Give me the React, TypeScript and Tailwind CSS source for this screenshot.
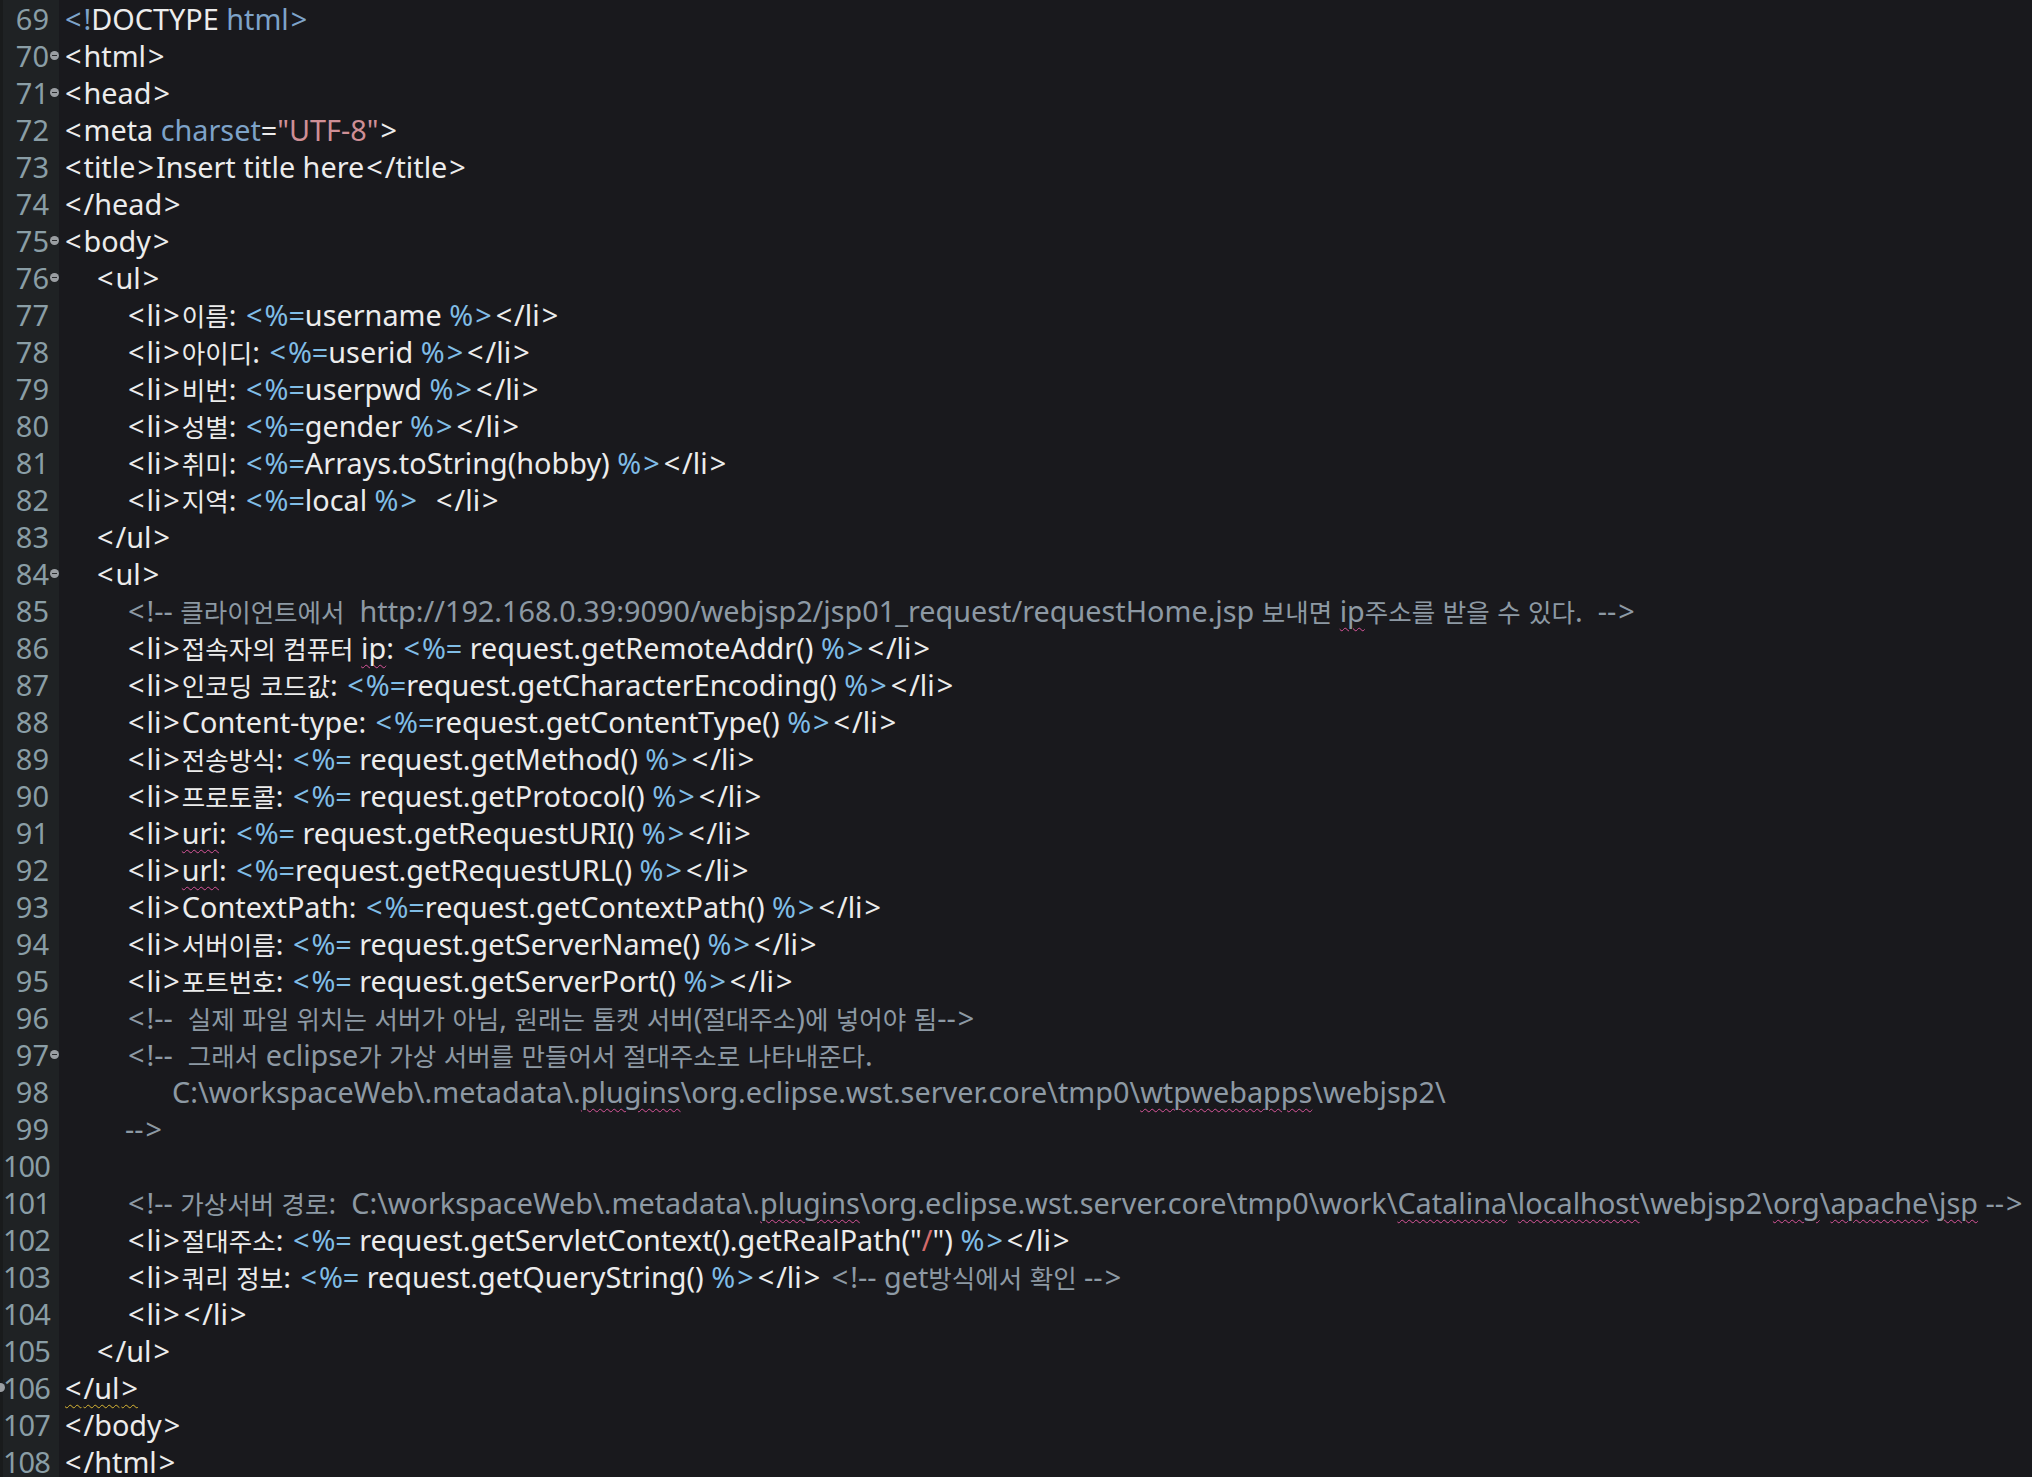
import React from "react";

type Seg = [string, string, string?];

type Line = {
  n: number;
  ind: string;
  fold?: boolean;
  segs: Seg[];
};

const color: Record<string, string> = {
  t: "text-[#ececec]",
  j: "text-[#80bde6]",
  c: "text-[#8d99a4]",
  a: "text-[#7ea3c9]",
  s: "text-[#cf8f96]",
  r: "text-[#d46a6a]",
};

const lines: Line[] = [
  { n: 69, ind: "pl-0", segs: [["<!", "a"], ["DOCTYPE", "t"], [" html>", "a"]] },
  { n: 70, ind: "pl-0", fold: true, segs: [["<html>", "t"]] },
  { n: 71, ind: "pl-0", fold: true, segs: [["<head>", "t"]] },
  { n: 72, ind: "pl-0", segs: [["<meta ", "t"], ["charset", "a"], ["=", "t"], ['"UTF-8"', "s"], [">", "t"]] },
  { n: 73, ind: "pl-0", segs: [["<title>Insert title here</title>", "t"]] },
  { n: 74, ind: "pl-0", segs: [["</head>", "t"]] },
  { n: 75, ind: "pl-0", fold: true, segs: [["<body>", "t"]] },
  { n: 76, ind: "pl-[32px]", fold: true, segs: [["<ul>", "t"]] },
  { n: 77, ind: "pl-[63px]", segs: [["<li>이름: ", "t"], ["<%=", "j"], ["username ", "t"], ["%>", "j"], ["</li>", "t"]] },
  { n: 78, ind: "pl-[63px]", segs: [["<li>아이디: ", "t"], ["<%=", "j"], ["userid ", "t"], ["%>", "j"], ["</li>", "t"]] },
  { n: 79, ind: "pl-[63px]", segs: [["<li>비번: ", "t"], ["<%=", "j"], ["userpwd ", "t"], ["%>", "j"], ["</li>", "t"]] },
  { n: 80, ind: "pl-[63px]", segs: [["<li>성별: ", "t"], ["<%=", "j"], ["gender ", "t"], ["%>", "j"], ["</li>", "t"]] },
  { n: 81, ind: "pl-[63px]", segs: [["<li>취미: ", "t"], ["<%=", "j"], ["Arrays.toString(hobby) ", "t"], ["%>", "j"], ["</li>", "t"]] },
  { n: 82, ind: "pl-[63px]", segs: [["<li>지역: ", "t"], ["<%=", "j"], ["local ", "t"], ["%>", "j"], ["  </li>", "t"]] },
  { n: 83, ind: "pl-[32px]", segs: [["</ul>", "t"]] },
  { n: 84, ind: "pl-[32px]", fold: true, segs: [["<ul>", "t"]] },
  {
    n: 85,
    ind: "pl-[63px]",
    segs: [
      ["<!-- 클라이언트에서  http://192.168.0.39:9090/webjsp2/jsp01_request/requestHome.jsp 보내면 ", "c"],
      ["ip", "c", "p"],
      ["주소를 받을 수 있다.  -->", "c"],
    ],
  },
  { n: 86, ind: "pl-[63px]", segs: [["<li>접속자의 컴퓨터 ", "t"], ["ip", "t", "p"], [": ", "t"], ["<%=", "j"], [" request.getRemoteAddr() ", "t"], ["%>", "j"], ["</li>", "t"]] },
  { n: 87, ind: "pl-[63px]", segs: [["<li>인코딩 코드값: ", "t"], ["<%=", "j"], ["request.getCharacterEncoding() ", "t"], ["%>", "j"], ["</li>", "t"]] },
  { n: 88, ind: "pl-[63px]", segs: [["<li>Content-type: ", "t"], ["<%=", "j"], ["request.getContentType() ", "t"], ["%>", "j"], ["</li>", "t"]] },
  { n: 89, ind: "pl-[63px]", segs: [["<li>전송방식: ", "t"], ["<%=", "j"], [" request.getMethod() ", "t"], ["%>", "j"], ["</li>", "t"]] },
  { n: 90, ind: "pl-[63px]", segs: [["<li>프로토콜: ", "t"], ["<%=", "j"], [" request.getProtocol() ", "t"], ["%>", "j"], ["</li>", "t"]] },
  { n: 91, ind: "pl-[63px]", segs: [["<li>", "t"], ["uri", "t", "p"], [": ", "t"], ["<%=", "j"], [" request.getRequestURI() ", "t"], ["%>", "j"], ["</li>", "t"]] },
  { n: 92, ind: "pl-[63px]", segs: [["<li>", "t"], ["url", "t", "p"], [": ", "t"], ["<%=", "j"], ["request.getRequestURL() ", "t"], ["%>", "j"], ["</li>", "t"]] },
  { n: 93, ind: "pl-[63px]", segs: [["<li>ContextPath: ", "t"], ["<%=", "j"], ["request.getContextPath() ", "t"], ["%>", "j"], ["</li>", "t"]] },
  { n: 94, ind: "pl-[63px]", segs: [["<li>서버이름: ", "t"], ["<%=", "j"], [" request.getServerName() ", "t"], ["%>", "j"], ["</li>", "t"]] },
  { n: 95, ind: "pl-[63px]", segs: [["<li>포트번호: ", "t"], ["<%=", "j"], [" request.getServerPort() ", "t"], ["%>", "j"], ["</li>", "t"]] },
  { n: 96, ind: "pl-[63px]", segs: [["<!--  실제 파일 위치는 서버가 아님, 원래는 톰캣 서버(절대주소)에 넣어야 됨-->", "c"]] },
  { n: 97, ind: "pl-[63px]", fold: true, segs: [["<!--  그래서 eclipse가 가상 서버를 만들어서 절대주소로 나타내준다.", "c"]] },
  {
    n: 98,
    ind: "pl-[109px]",
    segs: [
      ["C:\\workspaceWeb\\.metadata\\.", "c"],
      ["plugins", "c", "p"],
      ["\\org.eclipse.wst.server.core\\tmp0\\", "c"],
      ["wtpwebapps", "c", "p"],
      ["\\webjsp2\\", "c"],
    ],
  },
  { n: 99, ind: "pl-[62px]", segs: [["-->", "c"]] },
  { n: 100, ind: "pl-0", segs: [] },
  {
    n: 101,
    ind: "pl-[63px]",
    segs: [
      ["<!-- 가상서버 경로:  C:\\workspaceWeb\\.metadata\\.", "c"],
      ["plugins", "c", "p"],
      ["\\org.eclipse.wst.server.core\\tmp0\\work\\", "c"],
      ["Catalina", "c", "p"],
      ["\\", "c"],
      ["localhost", "c", "p"],
      ["\\webjsp2\\", "c"],
      ["org", "c", "p"],
      ["\\", "c"],
      ["apache", "c", "p"],
      ["\\", "c"],
      ["jsp", "c", "p"],
      [" -->", "c"],
    ],
  },
  {
    n: 102,
    ind: "pl-[63px]",
    segs: [["<li>절대주소: ", "t"], ["<%=", "j"], [' request.getServletContext().getRealPath("', "t"], ["/", "r"], ['") ', "t"], ["%>", "j"], ["</li>", "t"]],
  },
  {
    n: 103,
    ind: "pl-[63px]",
    segs: [["<li>쿼리 정보: ", "t"], ["<%=", "j"], [" request.getQueryString() ", "t"], ["%>", "j"], ["</li> ", "t"], ["<!-- get방식에서 확인 -->", "c"]],
  },
  { n: 104, ind: "pl-[63px]", segs: [["<li></li>", "t"]] },
  { n: 105, ind: "pl-[32px]", segs: [["</ul>", "t"]] },
  { n: 106, ind: "pl-0", segs: [["</ul>", "t", "y"]] },
  { n: 107, ind: "pl-0", segs: [["</body>", "t"]] },
  { n: 108, ind: "pl-0", segs: [["</html>", "t"]] },
];

const HANGUL = /[\uAC00-\uD7A3\u3131-\u318E]/;

// hangul runs use the CJK face at their own size; angle brackets get a bit of air like the editor font
function Text({ s }: { s: string }) {
  const parts = s.split(/([\uAC00-\uD7A3\u3131-\u318E]+|[<>])/).filter((p) => p !== "");
  return (
    <>
      {parts.map((p, i) => {
        if (HANGUL.test(p))
          return (
            <span key={i} className="text-[25.5px] font-['Noto_Sans_CJK_KR',sans-serif]">
              {p}
            </span>
          );
        if (p === "<" || p === ">")
          return (
            <span key={i} className="mx-[2px]">
              {p}
            </span>
          );
        return <React.Fragment key={i}>{p}</React.Fragment>;
      })}
    </>
  );
}

const squiggle: Record<string, string> = {
  p: "underline decoration-wavy decoration-[#d8559a] decoration-1 underline-offset-[5px]",
  y: "underline decoration-wavy decoration-[#d9b634] decoration-1 underline-offset-[5px]",
};

function Row({ line }: { line: Line }) {
  return (
    <div className="flex h-[37px] items-center">
      <div className="relative flex h-full w-[56px] shrink-0 items-center justify-end bg-[#1f2224] text-[29px] text-[#8a9ea6]">
        {line.n === 106 && (
          <span className="absolute left-[-7px] top-[14px] h-[9px] w-[9px] rounded-full bg-[#9a9ea2]" />
        )}
        <span className={line.n >= 100 ? "tracking-[-1px]" : ""}>{line.n}</span>
        <span className="flex w-[10px] items-center justify-center">
          {line.fold && (
            <span className="flex h-[9px] w-[9px] items-center justify-center rounded-full bg-[#9a9ea2]">
              <span className="h-[1px] w-[5px] bg-[#2a2c2e]" />
            </span>
          )}
        </span>
      </div>
      <div className="pl-[4px]">
        <div className={`whitespace-pre ${line.ind}`}>
          {line.segs.map((sg, i) => (
            <span key={i} className={`${color[sg[1]]} ${sg[2] ? squiggle[sg[2]] : ""}`}>
              <Text s={sg[0]} />
            </span>
          ))}
        </div>
      </div>
    </div>
  );
}

export default function App() {
  return (
    <div className="h-[1477px] w-[2032px] overflow-hidden bg-[#19191d] font-['Noto_Sans','Noto_Sans_CJK_KR',sans-serif] text-[28.8px] leading-[37px]">
      <div className="flex">
        <div className="w-[3px] shrink-0 bg-[#191b1c]" />
        <div className="flex-1">
          {lines.map((l) => (
            <Row key={l.n} line={l} />
          ))}
        </div>
      </div>
    </div>
  );
}
